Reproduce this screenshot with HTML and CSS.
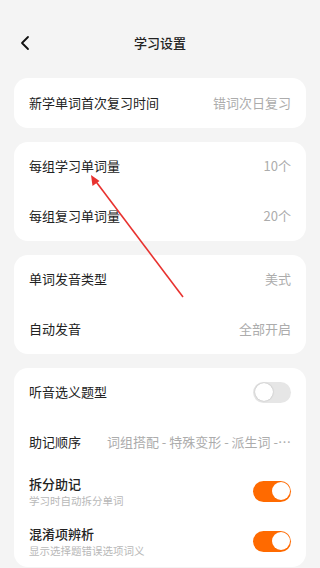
FILE: index.html
```html
<!DOCTYPE html>
<html lang="zh">
<head>
<meta charset="utf-8">
<link rel="stylesheet" href="styles.css">
</head>
<body>
<div class="page">
  <header class="header">
    <svg class="back" width="12" height="16" viewBox="0 0 12 16"><path d="M9 2 L3 8 L9 14" fill="none" stroke="#111" stroke-width="1.8" stroke-linecap="round" stroke-linejoin="round"/></svg>
    <div class="title">学习设置</div>
  </header>

  <section class="card">
    <div class="row"><span class="label">新学单词首次复习时间</span><span class="value">错词次日复习</span></div>
  </section>

  <section class="card">
    <div class="row"><span class="label">每组学习单词量</span><span class="value">10个</span></div>
    <div class="row"><span class="label">每组复习单词量</span><span class="value">20个</span></div>
  </section>

  <section class="card">
    <div class="row"><span class="label">单词发音类型</span><span class="value">美式</span></div>
    <div class="row"><span class="label">自动发音</span><span class="value">全部开启</span></div>
  </section>

  <section class="card last">
    <div class="row"><span class="label">听音选义题型</span><span class="toggle off"><span class="knob"></span></span></div>
    <div class="row"><span class="label">助记顺序</span><span class="value">词组搭配 - 特殊变形 - 派生词 -⋯</span></div>
    <div class="row sub"><div class="texts"><span class="label">拆分助记</span><span class="desc">学习时自动拆分单词</span></div><span class="toggle on"><span class="knob"></span></span></div>
    <div class="row sub"><div class="texts"><span class="label">混淆项辨析</span><span class="desc">显示选择题错误选项词义</span></div><span class="toggle on"><span class="knob"></span></span></div>
  </section>

  <svg class="arrow" width="320" height="568" viewBox="0 0 320 568">
    <line x1="183" y1="297" x2="94" y2="179" stroke="#e8322f" stroke-width="1.6"/>
    <polygon points="91,175 92.5,186 99.5,181" fill="#e8322f"/>
  </svg>
</div>
</body>
</html>
```
FILE: styles.css
```css
* { box-sizing: border-box; }
html, body { margin: 0; padding: 0; }
body {
  background: #f4f4f4;
  font-family: "Noto Sans CJK SC", "Noto Sans", sans-serif;
  color: #222;
  width: 320px;
  height: 568px;
  overflow: hidden;
}
.page {
  position: relative;
  padding: 0 14px;
  display: flex;
  flex-direction: column;
  gap: 14px;
}
.header {
  position: relative;
  height: 64px;
  display: flex;
  align-items: center;
  justify-content: center;
  padding-top: 21px;
}
.back {
  position: absolute;
  left: 5px;
  top: 35px;
}
.title {
  font-size: 13px;
  line-height: 16px;
  font-weight: 500;
  color: #222;
}
.card {
  background: #fff;
  border-radius: 14px;
  padding: 0 15px;
}
.row {
  height: 49.5px;
  display: flex;
  align-items: center;
  justify-content: space-between;
  gap: 10px;
  padding-bottom: 1px;
}
.card:first-of-type .row { height: 50px; }
.label {
  font-size: 13px;
  line-height: 18px;
  color: #222;
  white-space: nowrap;
}
.value {
  font-size: 13px;
  line-height: 18px;
  color: #acacac;
  white-space: nowrap;
}
.row.sub { height: 50px; padding-bottom: 2px; }
.texts {
  display: flex;
  flex-direction: column;
  gap: 1px;
}
.texts .label { font-weight: 500; }
.desc {
  font-size: 10.5px;
  line-height: 14px;
  color: #b8b8b8;
}
.toggle {
  width: 38px;
  height: 21px;
  border-radius: 11px;
  position: relative;
  flex: none;
}
.toggle.off { background: #e6e6e6; }
.toggle.on { background: #ff6a00; }
.knob {
  position: absolute;
  top: 1.5px;
  width: 18px;
  height: 18px;
  border-radius: 50%;
  background: #fff;
}
.toggle.off .knob { left: 1.5px; box-shadow: 0 0 1.5px rgba(0,0,0,0.3); }
.toggle.on .knob { right: 1.5px; }
.arrow {
  position: absolute;
  left: 0;
  top: 0;
  pointer-events: none;
}
```
